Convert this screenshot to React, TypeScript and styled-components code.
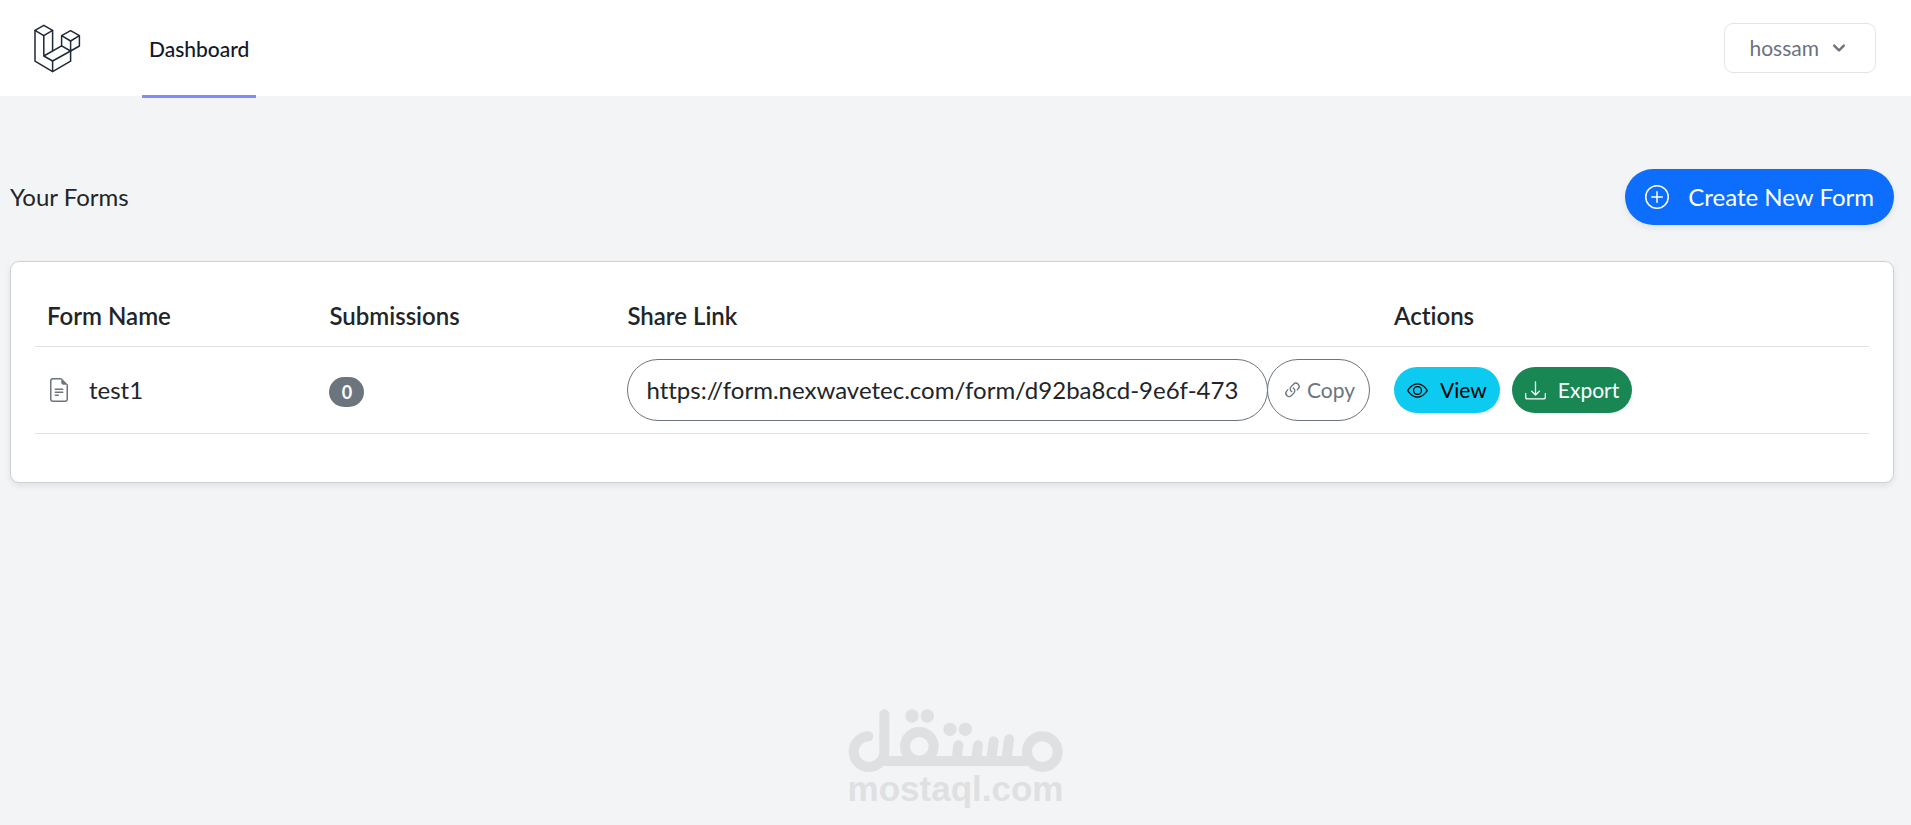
import React from 'react';
import styled, { createGlobalStyle, css } from 'styled-components';
import {
  BsDownload,
  BsEye,
  BsFileEarmarkText,
  BsLink45Deg,
  BsPlusCircle,
} from 'react-icons/bs';

const GlobalStyle = createGlobalStyle`
  *, *::before, *::after { box-sizing: border-box; }
  body {
    margin: 0;
    background: #f3f4f6;
    color: #212529;
    font-family: Lato, "Open Sans", sans-serif;
    font-size: 24px;
    font-variant-ligatures: none;
    line-height: 36px;
  }
  button, input { font: inherit; font-variant-ligatures: none; }
`;

const Page = styled.div`
  display: flex;
  flex-direction: column;
  min-height: 100vh;
`;

const NavBar = styled.nav`
  display: flex;
  align-items: center;
  height: 96px;
  padding: 0 35px 0 32px;
  background: #fff;
`;

const LogoLink = styled.a`
  display: block;
  width: 50px;
  height: 50px;
  color: #1f2937;

  svg { display: block; }
`;

const NavLink = styled.a`
  display: flex;
  align-items: center;
  align-self: flex-start;
  height: 98px;
  margin-left: 60px;
  padding: 3px 7px 0;
  border-bottom: 3px solid #818cf8;
  color: #111827;
  font-size: 21px;
  font-weight: 500;
  line-height: 30px;
  text-decoration: none;
`;

const UserButton = styled.button`
  display: flex;
  align-items: center;
  gap: 8px;
  height: 50px;
  margin-left: auto;
  padding: 0 24px;
  border: 1px solid #e2e4e8;
  border-radius: 9px;
  background: #fff;
  color: #6b7280;
  font-size: 21px;
  line-height: 30px;
  cursor: pointer;
`;

const Main = styled.main`
  padding: 73px 17px 0 10px;
`;

const TitleRow = styled.header`
  display: flex;
  align-items: center;
  justify-content: space-between;
  margin-bottom: 36px;
`;

const Title = styled.h2`
  margin: 0;
  font-size: 24px;
  font-weight: 400;
`;

const CreateButton = styled.button`
  display: flex;
  align-items: center;
  gap: 19px;
  height: 56px;
  padding: 0 20px;
  border: 0;
  border-radius: 28px;
  background: #0d6efd;
  box-shadow: 0 3px 6px rgba(0, 0, 0, 0.075);
  color: #fff;
  cursor: pointer;
`;

const Card = styled.section`
  padding: 24px;
  border: 1px solid #cfd0d2;
  border-radius: 9px;
  background: #fff;
  box-shadow: 0 3px 6px rgba(0, 0, 0, 0.075);
`;

const FormsTable = styled.table`
  width: 100%;
  margin-bottom: 24px;
  border-collapse: separate;
  border-spacing: 0;
  table-layout: fixed;
`;

const cell = css`
  padding: 12px;
  border-bottom: 1px solid #dee2e6;
  text-align: left;
  vertical-align: middle;
`;

const HeadCell = styled.th<{ $width?: string }>`
  ${cell}
  width: ${({ $width }) => $width ?? 'auto'};
  font-weight: 600;
`;

const Cell = styled.td`
  ${cell}
`;

const FormName = styled.div`
  display: flex;
  align-items: center;
  gap: 18px;

  svg { color: #6c757d; }
`;

const Badge = styled.span`
  display: block;
  width: 35px;
  height: 30px;
  margin-top: 4px;
  border-radius: 15px;
  background: #6c757d;
  color: #fff;
  font-size: 18px;
  font-weight: 700;
  line-height: 30px;
  text-align: center;
`;

const InputGroup = styled.div`
  display: flex;
  height: 62px;
`;

const LinkInput = styled.input`
  flex: 1;
  min-width: 0;
  padding: 0 18px;
  border: 1px solid #6c757d;
  border-radius: 31px;
  background: #fff;
  color: #212529;
  outline: none;
`;

const CopyButton = styled.button`
  display: flex;
  align-items: center;
  justify-content: center;
  gap: 4px;
  width: 103px;
  margin-left: -1px;
  padding: 0;
  border: 1px solid #6c757d;
  border-radius: 31px;
  background: #fff;
  color: #6c757d;
  font-size: 21px;
  cursor: pointer;
`;

const Actions = styled.div`
  display: flex;
  gap: 12px;
`;

const ActionButton = styled.button<{ $tone: 'info' | 'success' }>`
  display: flex;
  align-items: center;
  gap: 12px;
  height: 46px;
  padding: 0 13px;
  border: 0;
  border-radius: 23px;
  background: ${({ $tone }) => ($tone === 'info' ? '#0dcaf0' : '#198754')};
  color: ${({ $tone }) => ($tone === 'info' ? '#000' : '#fff')};
  font-size: 21px;
  cursor: pointer;
`;

const Watermark = styled.footer`
  display: flex;
  flex-direction: column;
  align-items: center;
  margin-top: auto;
  padding-bottom: 20px;
  color: #dfe0e2;
  font-family: "Liberation Sans", Arial, sans-serif;
  font-size: 35px;
  font-weight: 700;
  line-height: 32px;

  svg { display: block; }
`;

function Logo() {
  return (
    <svg
      width="50"
      height="50"
      viewBox="0 0 50 50"
      fill="none"
      stroke="currentColor"
      strokeWidth="1.5"
      strokeLinejoin="round"
      strokeLinecap="round"
      aria-hidden="true"
    >
      <path d="M3 7.4 11.8 2.3 20.6 7.4 11.8 12.7Z" />
      <path d="M3 7.4V38.2L20.6 48.6 38.6 38.2V28" />
      <path d="M11.8 12.7V33L20.6 38 38.6 28 29.6 22.8 11.8 33" />
      <path d="M20.6 7.4V28M20.6 38V48.6" />
      <path d="M29.6 12.7 38.6 7.7 47.4 12.7 38.6 18Z" />
      <path d="M29.6 12.7V22.8M38.6 18V28L47.4 23V12.7" />
    </svg>
  );
}

function Chevron() {
  return (
    <svg width="24" height="24" viewBox="0 0 20 20" fill="currentColor" aria-hidden="true">
      <path
        fillRule="evenodd"
        clipRule="evenodd"
        d="M5.293 7.293a1 1 0 011.414 0L10 10.586l3.293-3.293a1 1 0 111.414 1.414l-4 4a1 1 0 01-1.414 0l-4-4a1 1 0 010-1.414z"
      />
    </svg>
  );
}

function MostaqlMark() {
  return (
    <svg
      width="215"
      height="64"
      viewBox="84 56 645 192"
      fill="none"
      stroke="currentColor"
      strokeWidth="30"
      strokeLinecap="round"
      aria-hidden="true"
    >
      <path d="M145 138A46 46 0 1 0 193 185V72" />
      <path d="M190 212H640" strokeLinecap="butt" />
      <circle cx="298" cy="168" r="43" />
      <circle cx="667" cy="184" r="46" />
      <path d="M415 165 410 205M474 165 469 205M521 153 514 205M567 147 560 205" />
      <g fill="currentColor" stroke="none">
        <circle cx="276" cy="77" r="20" />
        <circle cx="322" cy="77" r="20" />
        <circle cx="390" cy="117" r="20" />
        <circle cx="436" cy="117" r="20" />
      </g>
    </svg>
  );
}

const forms = [
  {
    name: 'test1',
    submissions: 0,
    link: 'https://form.nexwavetec.com/form/d92ba8cd-9e6f-473',
  },
];

export default function App() {
  return (
    <Page>
      <GlobalStyle />
      <NavBar>
        <LogoLink href="#" aria-label="Home">
          <Logo />
        </LogoLink>
        <NavLink href="#" aria-current="page">Dashboard</NavLink>
        <UserButton type="button">
          hossam
          <Chevron />
        </UserButton>
      </NavBar>

      <Main>
        <TitleRow>
          <Title>Your Forms</Title>
          <CreateButton type="button">
            <BsPlusCircle aria-hidden="true" />
            Create New Form
          </CreateButton>
        </TitleRow>

        <Card>
          <FormsTable>
            <thead>
              <tr>
                <HeadCell scope="col" $width="15.4%">Form Name</HeadCell>
                <HeadCell scope="col" $width="16.25%">Submissions</HeadCell>
                <HeadCell scope="col" $width="41.8%">Share Link</HeadCell>
                <HeadCell scope="col">Actions</HeadCell>
              </tr>
            </thead>
            <tbody>
              {forms.map((form) => (
                <tr key={form.name}>
                  <Cell>
                    <FormName>
                      <BsFileEarmarkText aria-hidden="true" />
                      {form.name}
                    </FormName>
                  </Cell>
                  <Cell>
                    <Badge>{form.submissions}</Badge>
                  </Cell>
                  <Cell>
                    <InputGroup>
                      <LinkInput
                        type="text"
                        readOnly
                        value={form.link}
                        aria-label={`Share link for ${form.name}`}
                      />
                      <CopyButton type="button">
                        <BsLink45Deg aria-hidden="true" />
                        Copy
                      </CopyButton>
                    </InputGroup>
                  </Cell>
                  <Cell>
                    <Actions>
                      <ActionButton type="button" $tone="info">
                        <BsEye aria-hidden="true" />
                        View
                      </ActionButton>
                      <ActionButton type="button" $tone="success">
                        <BsDownload aria-hidden="true" />
                        Export
                      </ActionButton>
                    </Actions>
                  </Cell>
                </tr>
              ))}
            </tbody>
          </FormsTable>
        </Card>
      </Main>

      <Watermark>
        <MostaqlMark />
        mostaql.com
      </Watermark>
    </Page>
  );
}
